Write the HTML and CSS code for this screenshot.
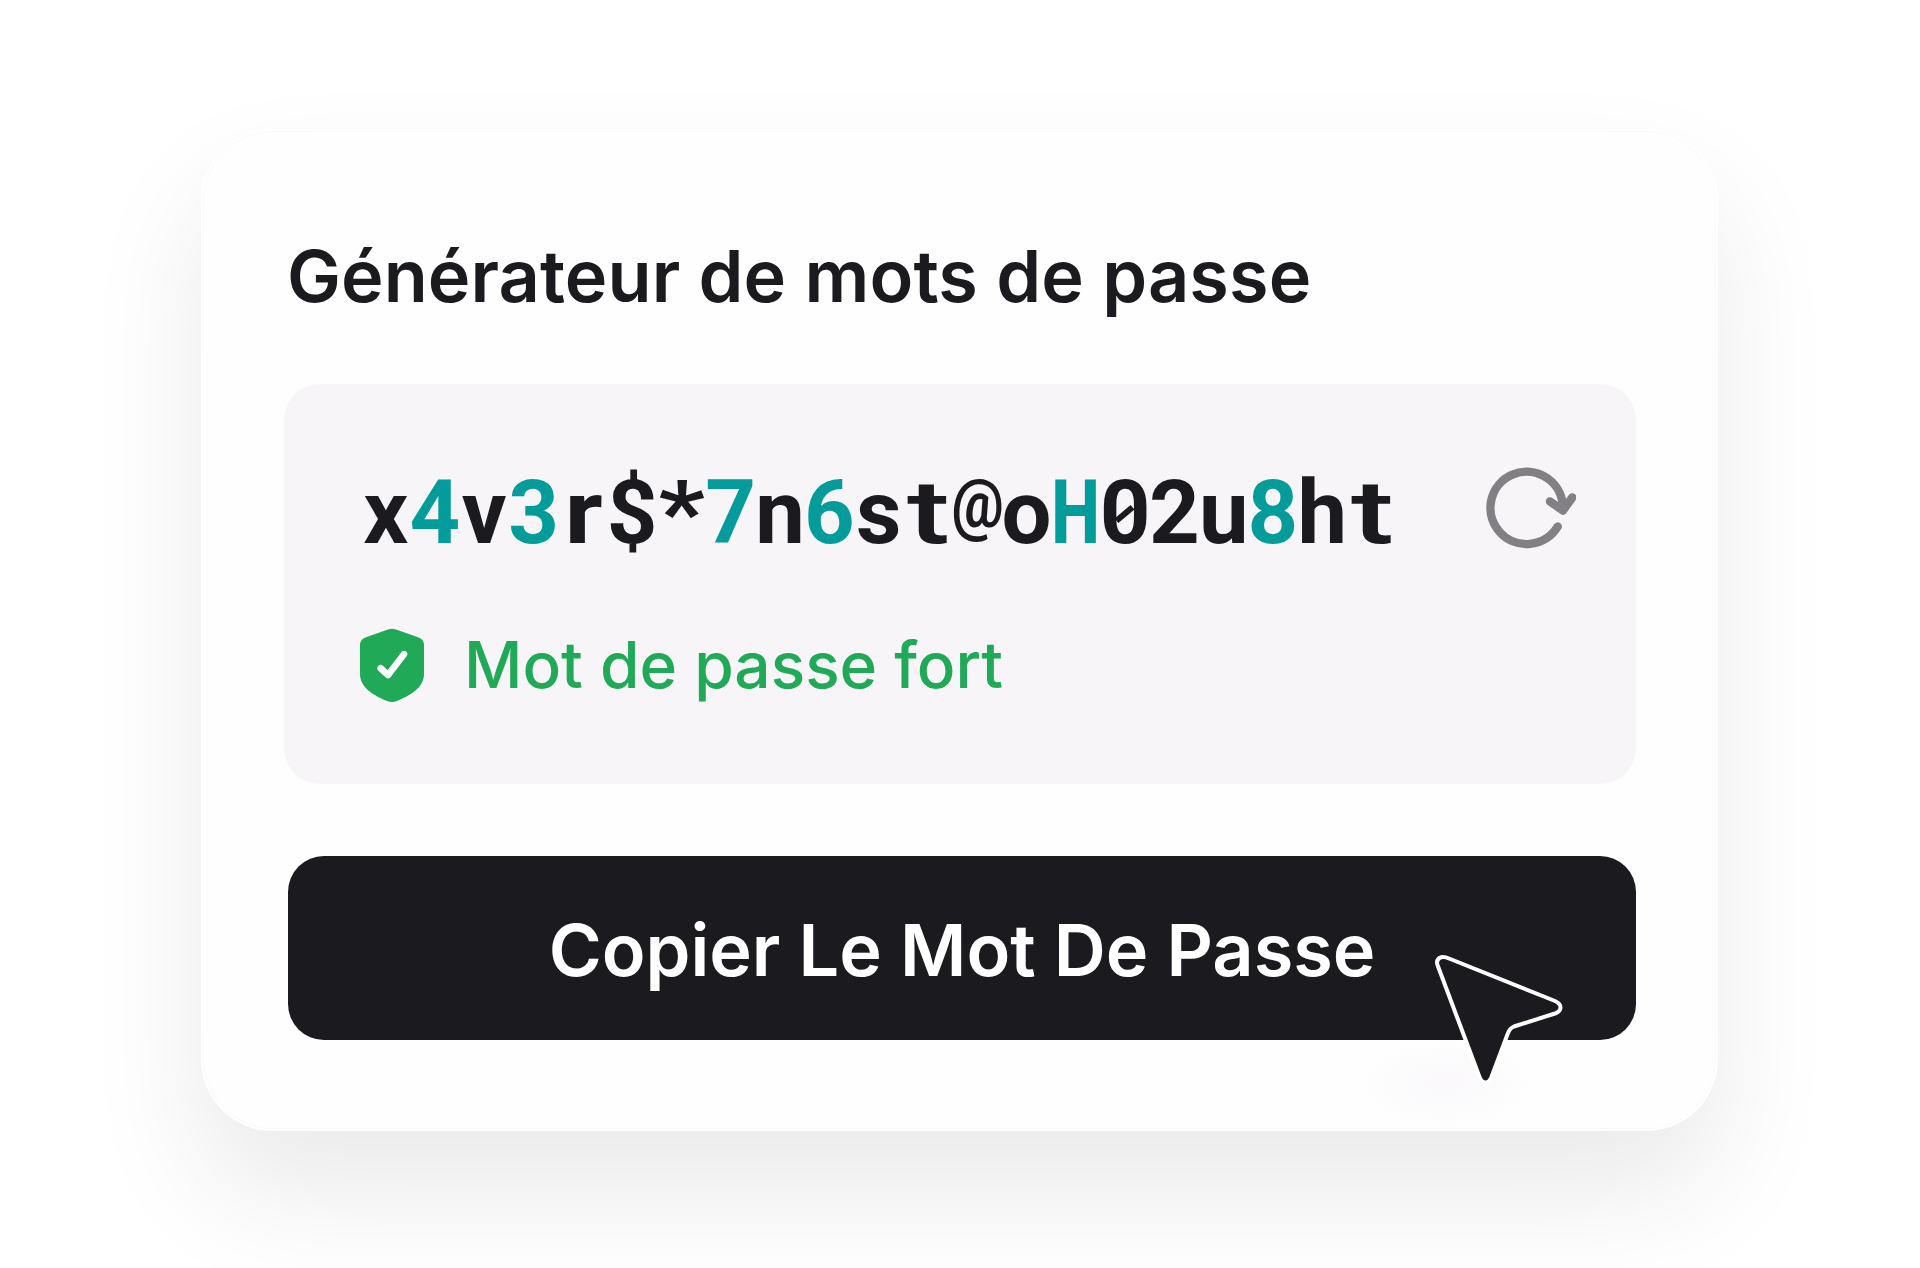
FILE: index.html
```html
<!DOCTYPE html>
<html lang="fr">
<head>
    <meta charset="UTF-8">
    <meta name="viewport" content="width=device-width, initial-scale=1.0">
    <title>Générateur de mots de passe</title>
    <link rel="stylesheet" href="styles.css">
</head>
<body>
    <div class="card">
        <h2>Générateur de mots de passe</h2>

        <div class="result">
            <div class="password-row">
                <div class="password"><span>x</span><span class="hl">4</span><span>v</span><span class="hl">3</span><span class="r">r</span><span class="dollar">$</span><span class="star">*</span><span class="hl">7</span><span>n</span><span class="hl">6</span><span>s</span><span class="t">t</span><span class="at">@</span><span>o</span><span class="hl cap">H</span><span class="zero">0</span><span>2</span><span>u</span><span class="hl">8</span><span>h</span><span class="t">t</span></div>
                <svg class="refresh" viewBox="0 0 96 90" fill="none" stroke="#828084" stroke-width="8.4" stroke-linecap="round" stroke-linejoin="round">
                    <path d="M77.7 63.5A36.2 36.2 0 1 1 82.6 40.5V46"/>
                    <path d="M70 38.5L83 47.500L92.300 34.500"/>
                </svg>
            </div>
            <div class="strength">
                <svg class="shield" viewBox="0 0 64 74">
                    <path fill="#20a957" d="M28 1.6Q32 0 36 1.6L58 9.2Q64 11.5 64 17V46C64 60 49 68 37 73Q32 75 27 73C15 68 0 60 0 46V17Q0 11.5 6 9.2Z"/>
                    <path fill="none" stroke="#fff" stroke-width="6.6" stroke-linecap="round" stroke-linejoin="round" d="M20.6 40.2L28 47L44 26.2"/>
                </svg>
                <span>Mot de passe fort</span>
            </div>
        </div>

        <button type="button">Copier Le Mot De Passe</button>

        <div class="cursor-shadow"></div>
        <svg class="cursor" viewBox="0 0 190 180">
            <path fill="#1b1a1e" stroke="#fff" stroke-width="4" stroke-linejoin="round" d="M49 28.5L155 71Q160.500 73.500 160.500 77.500Q160.500 81.500 155 83.500L114 96.500Q110 98 108 103L91.500 147Q89.500 152.500 85.500 152.500Q81.500 152.500 79.500 147L37.500 35Q36 30.500 39.500 28Q43 25.800 49 28.500Z"/>
        </svg>
    </div>
</body>
</html>
```

FILE: styles.css
```css
body {
    margin: 0;
    height: 1268px;
    overflow: hidden;
    background: #fff;
    font-family: Inter, sans-serif;
    color: #1b1a1e;
}
.card {
    position: relative;
    box-sizing: border-box;
    width: 1517px;
    height: 1002px;
    margin: 129px 0 0 201px;
    padding: 105px 82px 0 83px;
    background: #fefefe;
    border-radius: 72px;
    box-shadow: 0 62px 120px rgba(0, 0, 0, 0.085), inset 0 0 0 2px #fff, inset 0 0 0 3px #fafafa;
    display: flex;
    flex-direction: column;
}
h2 {
    margin: 0 0 66px 3px;
    font-size: 72px;
    font-weight: 600;
    line-height: 84px;
    letter-spacing: 0.1px;
    white-space: nowrap;
}
.result {
    box-sizing: border-box;
    height: 400px;
    padding: 77px 60px 0 77px;
    background: #f7f5f8;
    border-radius: 36px;
}
.password-row {
    display: flex;
    justify-content: space-between;
}
.password {
    display: flex;
    align-items: baseline;
    font-family: Roboto, sans-serif;
    font-size: 88.5px;
    font-weight: 700;
    line-height: 104px;
}
/* fixed cells so that each character takes the same width */
.password span {
    width: 49.3px;
    display: flex;
    justify-content: center;
}
.password .hl {
    color: #049c9a;
}
.password .r {
    transform: translateX(1px) scaleX(1.18);
}
.password .t {
    font-weight: 500;
    transform: translateX(1px) scaleX(1.46);
}
.password .star {
    transform: scaleX(1.15);
}
.password .cap {
    font-weight: 800;
    transform: scaleX(0.78);
}
.password .at {
    font-weight: 700;
    transform: translateY(-9px) scale(0.66, 0.78);
}
.password .zero {
    position: relative;
}
/* slash of the zero */
.password .zero::after {
    content: "";
    position: absolute;
    left: 14px;
    top: 50px;
    width: 21px;
    height: 6px;
    background: #1b1a1e;
    transform: rotate(-40deg);
}
.refresh {
    width: 96px;
    height: 90px;
    margin-top: 2px;
}
.strength {
    display: flex;
    align-items: center;
    gap: 40px;
    margin: 60px 0 0 -1px;
    color: #20a957;
    font-size: 64px;
    font-weight: 500;
    line-height: 78px;
    white-space: nowrap;
}
.strength span {
    padding-top: 1px;
}
.shield {
    width: 64px;
    height: 74px;
}
button {
    height: 184px;
    margin: 72px 0 0 4px;
    padding: 2px 0 0;
    background: #1b1a1e;
    color: #fff;
    border: none;
    border-radius: 36px;
    font-family: Inter, sans-serif;
    font-size: 72px;
    font-weight: 600;
    cursor: pointer;
}
.cursor {
    position: absolute;
    left: 1199px;
    top: 801px;
    width: 190px;
    height: 180px;
}
.cursor-shadow {
    position: absolute;
    left: 1160px;
    top: 911px;
    width: 170px;
    height: 88px;
    background: radial-gradient(closest-side, #faf8fb, #fefefe);
}
```
